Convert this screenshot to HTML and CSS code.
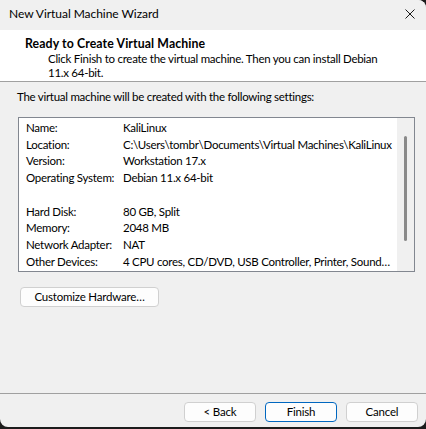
FILE: index.html
```html
<!DOCTYPE html>
<html>
<head>
<meta charset="utf-8">
<link rel="stylesheet" href="styles.css">
</head>
<body>
<div class="window">
  <div class="titlebar">
    <span class="title">New Virtual Machine Wizard</span>
    <span class="close">
      <svg width="10" height="10" viewBox="0 0 10 10"><path d="M0.5 0.5 L9.5 9.5 M9.5 0.5 L0.5 9.5" stroke="#1a1a1a" stroke-width="1" fill="none"/></svg>
    </span>
  </div>
  <div class="header">
    <div class="h-title">Ready to Create Virtual Machine</div>
    <div class="h-sub">Click Finish to create the virtual machine. Then you can install Debian<br>11.x 64-bit.</div>
  </div>
  <div class="content">
    <div class="intro">The virtual machine will be created with the following settings:</div>
    <div class="list">
      <div class="rows">
        <div class="row"><span class="k">Name:</span><span class="v">KaliLinux</span></div>
        <div class="row"><span class="k">Location:</span><span class="v">C:\Users\tombr\Documents\Virtual Machines\KaliLinux</span></div>
        <div class="row"><span class="k">Version:</span><span class="v">Workstation 17.x</span></div>
        <div class="row"><span class="k">Operating System:</span><span class="v">Debian 11.x 64-bit</span></div>
        <div class="row"><span class="k">&nbsp;</span><span class="v"></span></div>
        <div class="row"><span class="k">Hard Disk:</span><span class="v">80 GB, Split</span></div>
        <div class="row"><span class="k">Memory:</span><span class="v">2048 MB</span></div>
        <div class="row"><span class="k">Network Adapter:</span><span class="v">NAT</span></div>
        <div class="row"><span class="k">Other Devices:</span><span class="v">4 CPU cores, CD/DVD, USB Controller, Printer, Sound…</span></div>
      </div>
      <div class="scrollbar"><div class="thumb"></div></div>
    </div>
    <button class="btn customize">Customize Hardware…</button>
  </div>
  <div class="footer">
    <button class="btn">&lt; Back</button>
    <button class="btn primary">Finish</button>
    <button class="btn">Cancel</button>
  </div>
</div>
</body>
</html>
```
FILE: styles.css
```css
html, body {
  margin: 0;
  padding: 0;
  background: #1c1c1c;
}
body {
  font-family: "Lato", "Liberation Sans", sans-serif;
  font-size: 11.5px;
  letter-spacing: -0.27px;
  color: #000;
}
.window {
  width: 426px;
  height: 427px;
  background: #f0f0f0;
  border-radius: 0 8px 8px 8px;
  overflow: hidden;
  display: flex;
  flex-direction: column;
}
.titlebar {
  height: 30px;
  flex: none;
  display: flex;
  align-items: center;
  justify-content: space-between;
  padding: 0 11px 0 9px;
  background: #f0f0f0;
}
.title {
  font-size: 12px;
  letter-spacing: -0.05px;
  line-height: 16px;
  margin-top: -2px;
}
.close {
  display: flex;
  margin-top: -2px;
}
.header {
  flex: none;
  background: #fff;
  border-bottom: 1px solid #a0a0a0;
  padding-top: 7px;
  box-sizing: border-box;
  height: 52px;
}
.h-title {
  font-weight: bold;
  font-size: 12.3px;
  letter-spacing: 0.1px;
  line-height: 14px;
  padding-left: 25px;
}
.h-sub {
  line-height: 14px;
  padding-left: 48px;
  margin-top: 1px;
}
.content {
  flex: 1;
  display: flex;
  flex-direction: column;
  align-items: flex-start;
  padding: 7px 0 0 0;
}
.intro {
  line-height: 16px;
  padding-left: 17px;
}
.list {
  margin: 12px 0 0 18px;
  width: 397px;
  height: 155px;
  box-sizing: border-box;
  border: 1px solid #828790;
  background: #fff;
  display: flex;
}
.rows {
  flex: 1;
  padding: 2px 0 0 7px;
  overflow: hidden;
}
.row {
  display: flex;
  line-height: 16.7px;
  white-space: nowrap;
}
.k {
  width: 97px;
  flex: none;
}
.scrollbar {
  width: 17px;
  flex: none;
  background: #f0f0f0;
  display: flex;
  justify-content: center;
  padding-top: 18px;
  box-sizing: border-box;
}
.thumb {
  width: 3px;
  height: 105px;
  background: #8a8a8a;
  border-radius: 2px;
}
.btn {
  font-family: inherit;
  font-size: 11.5px;
  letter-spacing: -0.2px;
  color: #000;
  background: #fdfdfd;
  border: 1px solid #d0d0d0;
  border-radius: 4px;
  height: 20px;
  width: 72px;
  padding: 0;
  line-height: 16px;
}
.customize {
  margin: 15px 0 0 20px;
  width: 139px;
}
.footer {
  flex: none;
  height: 34px;
  border-top: 1px solid #a0a0a0;
  display: flex;
  justify-content: flex-end;
  gap: 9px;
  padding: 8px 8px 0 0;
  box-sizing: border-box;
}
.primary {
  border: 1px solid #0067c0;
  background: #fdfdfd;
}
```
